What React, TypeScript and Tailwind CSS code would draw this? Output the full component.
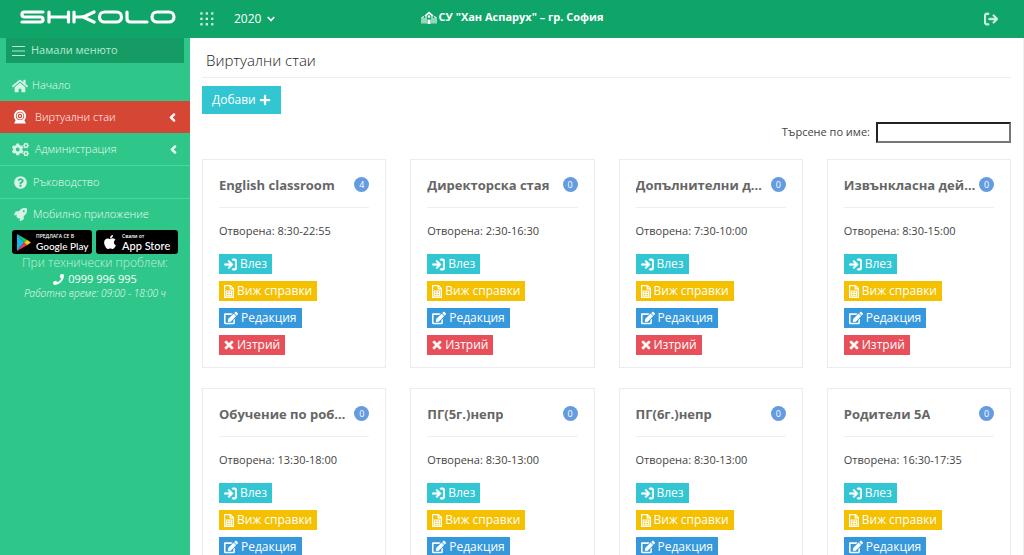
import React from "react";
import {
  FaHome,
  FaChevronLeft,
  FaCogs,
  FaQuestionCircle,
  FaRocket,
  FaPhone,
  FaEdit,
  FaTimes,
  FaPlus,
  FaApple,
} from "react-icons/fa";
import { FaArrowRightFromBracket, FaArrowRightToBracket } from "react-icons/fa6";

type Room = { name: string; count: number; open: string };

const rooms: Room[] = [
  { name: "English classroom", count: 4, open: "8:30-22:55" },
  { name: "Директорска стая", count: 0, open: "2:30-16:30" },
  { name: "Допълнителни дейности", count: 0, open: "7:30-10:00" },
  { name: "Извънкласна дейност", count: 0, open: "8:30-15:00" },
  { name: "Обучение по роботика", count: 0, open: "13:30-18:00" },
  { name: "ПГ(5г.)непр", count: 0, open: "8:30-13:00" },
  { name: "ПГ(6г.)непр", count: 0, open: "8:30-13:00" },
  { name: "Родители 5А", count: 0, open: "16:30-17:35" },
];

function Logo() {
  return (
    <svg viewBox="0 0 156 14" className="h-[14px] w-[156px]" fill="none" stroke="#fff" strokeWidth="3.2" strokeLinejoin="round" strokeLinecap="round" role="img" aria-label="Shkolo">
      <path d="M23 2H4.5Q2 2 2 4.5Q2 7 4.5 7H20.5Q23 7 23 9.5Q23 12 20.5 12H2" />
      <path d="M29 2V12M48.500 2V12M29 7H48.500" />
      <path d="M54 2V12M74 2L65 6.200Q63 7 60 7H54M63 7L74 12" />
      <rect x="79.500" y="2" width="22" height="10" rx="5" />
      <path d="M107 2V8.500Q107 12 110.500 12H127" />
      <rect x="132" y="2" width="22" height="10" rx="5" />
    </svg>
  );
}

function GridDots() {
  return (
    <svg viewBox="0 0 14 14" className="size-[14px]" fill="#d3efe2" aria-hidden="true">
      {[0.3, 5.7, 11.1].map((y) => [0.3, 5.7, 11.1].map((x) => <rect key={`${x}-${y}`} x={x} y={y} width="2.3" height="2.3" />))}
    </svg>
  );
}

function SchoolIcon() {
  return (
    <svg viewBox="0 0 16 13" className="h-[13px] w-4" fill="none" stroke="#fff" strokeWidth="1.100" aria-hidden="true">
      <path d="M1 12.500V6.500L3 5.500M15 12.500V6.500L13 5.500M3 12.500V7M13 12.500V7" />
      <path d="M5 12.500V4.500L8 2L11 4.500V12.500M3.800 4.800L8 1.300L12.200 4.800" />
      <circle cx="8" cy="5.600" r=".8" />
      <path d="M7 12.500V9H9V12.500Z" fill="#fff" />
    </svg>
  );
}

function WebcamIcon() {
  return (
    <svg viewBox="0 0 14 14" className="size-[14px]" aria-hidden="true">
      <circle cx="7" cy="6" r="5.200" fill="none" stroke="#fff" strokeWidth="1.900" />
      <circle cx="7" cy="6" r="2.800" fill="none" stroke="#fff" strokeWidth="1.200" />
      <circle cx="7" cy="6" r=".9" fill="#fff" />
      <path d="M2.500 10.200H11.500L12.800 13.500H1.200Z" fill="#fff" />
    </svg>
  );
}

function SheetIcon() {
  return (
    <svg viewBox="0 0 10 13" className="h-[13px] w-[10px]" fill="none" stroke="#fff" aria-hidden="true">
      <path d="M.6 .6H6.500L9.400 3.500V12.400H.6ZM6.200 .6V3.800H9.400" strokeWidth="1.200" />
      <path d="M2.300 6H7.700V10.800H2.300ZM2.300 8.400H7.700M5 6V10.800" strokeWidth="1.200" />
    </svg>
  );
}

function PlayIcon() {
  return (
    <svg viewBox="0 0 15 17" className="h-[17px] w-[15px] shrink-0" aria-hidden="true">
      <path d="M1 0L8 8.5L1 17Z" fill="#12b9e8" />
      <path d="M1 0L11 5.8L8 8.5Z" fill="#20c66b" />
      <path d="M11 5.8L15 8.5L11 11.2L8 8.5Z" fill="#fbc812" />
      <path d="M1 17L11 11.2L8 8.5Z" fill="#ed3c4b" />
    </svg>
  );
}

const action = "flex h-5 items-center gap-[3px] px-[5px] text-xs leading-5 text-white";

function RoomCard({ room }: { room: Room }) {
  return (
    <article className="min-w-0 border border-[#e9edf1] px-4 pt-[15px] pb-3">
      <header className="flex h-[33px] items-start justify-between gap-[2px] border-b border-[#eee]">
        <h2 className="truncate text-[13px] leading-5 font-bold text-[#666]">{room.name}</h2>
        <span className="mt-[2px] flex size-[15px] shrink-0 items-center justify-center rounded-full bg-[#659be0] text-[9px] leading-none text-white">
          {room.count}
        </span>
      </header>
      <p className="mt-[14px] text-[11px] leading-[18px]">Отворена: {room.open}</p>
      <div className="mt-[14px] flex flex-col items-start gap-[7px]">
        <button className={`${action} bg-[#32c5d2]`}><FaArrowRightToBracket className="size-[13px] stroke-current stroke-[24px]" />Влез</button>
        <button className={`${action} bg-[#f4c000]`}><SheetIcon />Виж справки</button>
        <button className={`${action} bg-[#3598dc]`}><FaEdit className="size-[14px]" />Редакция</button>
        <button className={`${action} bg-[#e7505a]`}><FaTimes className="-mx-px size-3 stroke-current stroke-[24px]" />Изтрий</button>
      </div>
    </article>
  );
}

export default function App() {
  return (
    <div className="flex h-screen flex-col overflow-hidden bg-white font-['Open_Sans','Noto_Sans',sans-serif] text-[#444]">
      <header className="flex h-[38px] shrink-0 items-center bg-[#0fa569] text-white">
        <div className="flex flex-1 items-center">
          <a href="#home" className="ml-5 pb-1"><Logo /></a>
          <button className="ml-6" aria-label="Модули"><GridDots /></button>
          <button className="ml-5 flex items-center gap-[6px] text-xs">
            2020
            <svg viewBox="0 0 8 6" className="h-[6px] w-2" fill="none" stroke="currentColor" strokeWidth="1.6" aria-hidden="true"><path d="M.8 1L4 4.5L7.2 1" /></svg>
          </button>
        </div>
        <div className="flex items-center gap-[2px] pb-1 text-[11px] font-bold">
          <SchoolIcon />СУ "Хан Аспарух" – гр. София
        </div>
        <div className="flex flex-1 justify-end">
          <button className="mr-[26px] text-sm text-[#d9f3e7]" aria-label="Изход"><FaArrowRightFromBracket className="stroke-current stroke-[20px]" /></button>
        </div>
      </header>

      <div className="flex min-h-0 flex-1">
        <aside className="w-[190px] shrink-0 bg-[#2fc68a] text-[11px] text-[#edfbf5]">
          <button className="mx-[6px] flex h-[25px] w-[178px] items-center gap-[6px] bg-[#159c65] px-[6px] text-[#b5e9d1]">
            <svg viewBox="0 0 13 10" className="h-[10px] w-[13px]" stroke="currentColor" aria-hidden="true"><path d="M0 .5H13M0 5H13M0 9.5H13" /></svg>
            Намали менюто
          </button>
          <nav className="mt-[6px] font-light">
            <a href="#home" className="flex h-8 items-center gap-1 px-3 pt-px"><FaHome className="size-4 text-[#d5f3e6]" />Начало</a>
            <a href="#rooms" className="flex h-8 items-center gap-2 bg-[#d64635] px-[13px] text-white">
              <WebcamIcon />Виртуални стаи<FaChevronLeft className="ml-auto size-[9px] stroke-current stroke-[60px]" />
            </a>
            <a href="#admin" className="flex h-[33px] items-center gap-[6px] border-b border-[#4bd6a0] px-3"><FaCogs className="size-[17px] text-[#d5f3e6]" />Администрация<FaChevronLeft className="ml-auto size-[9px] stroke-current stroke-[60px]" /></a>
            <a href="#guide" className="flex h-[33px] items-center gap-[6px] border-b border-[#4bd6a0] px-[14px]"><FaQuestionCircle className="size-[13px] text-[#d5f3e6]" />Ръководство</a>
            <a href="#mobile" className="flex h-[31px] items-center gap-[6px] px-[14px]"><FaRocket className="size-[13px] text-[#d5f3e6]" />Мобилно приложение</a>
          </nav>
          <div className="flex gap-1 px-3 font-normal text-white">
            <a href="#google-play" className="flex h-6 min-w-0 flex-1 items-center gap-[5px] rounded-[3px] bg-black pl-1">
              <PlayIcon />
              <span className="flex flex-col whitespace-nowrap"><span className="text-[5px] leading-[7px] font-semibold">ПРЕДЛАГА СЕ В</span><span className="font-[Lato] text-[10px] leading-3 font-medium">Google Play</span></span>
            </a>
            <a href="#app-store" className="flex h-6 min-w-0 flex-1 items-center gap-1 rounded-[3px] bg-black pl-[6px]">
              <FaApple className="size-4 shrink-0" />
              <span className="flex flex-col whitespace-nowrap"><span className="text-[5px] leading-[7px] font-semibold">Свали от</span><span className="font-[Lato] text-[11px] leading-3 font-medium">App Store</span></span>
            </a>
          </div>
          <div className="text-center">
            <p className="text-xs leading-[18px] font-light text-[#c4f0dd]">При технически проблем:</p>
            <a href="tel:0999996995" className="flex items-center justify-center gap-1 text-[11px] leading-[14px] text-white"><FaPhone className="size-[11px]" />0999 996 995</a>
            <p className="text-[10px] leading-[14px] font-light italic">Работно време: 09:00 - 18:00 ч</p>
          </div>
        </aside>

        <main className="min-w-0 flex-1 border-r border-[#eee] pr-3 pl-3">
          <h1 className="border-b border-[#eee] px-1 pt-3 pb-[6px] text-[15px] leading-[21px] font-light text-[#222]">Виртуални стаи</h1>
          <button className="mt-2 flex h-7 items-center gap-[3px] bg-[#32c5d2] px-[10px] text-xs text-white">Добави<FaPlus className="size-3" /></button>
          <div className="mt-2 flex items-center justify-end gap-[6px] text-[11px]">
            <label htmlFor="search">Търсене по име:</label>
            <input id="search" className="h-[21px] w-[135px] border-2 border-[#767676] border-t-[#222] border-l-[#222] px-1" />
          </div>
          <div className="mt-4 grid grid-cols-4 gap-x-6 gap-y-5">
            {rooms.map((room) => <RoomCard key={room.name} room={room} />)}
          </div>
        </main>
      </div>
    </div>
  );
}
